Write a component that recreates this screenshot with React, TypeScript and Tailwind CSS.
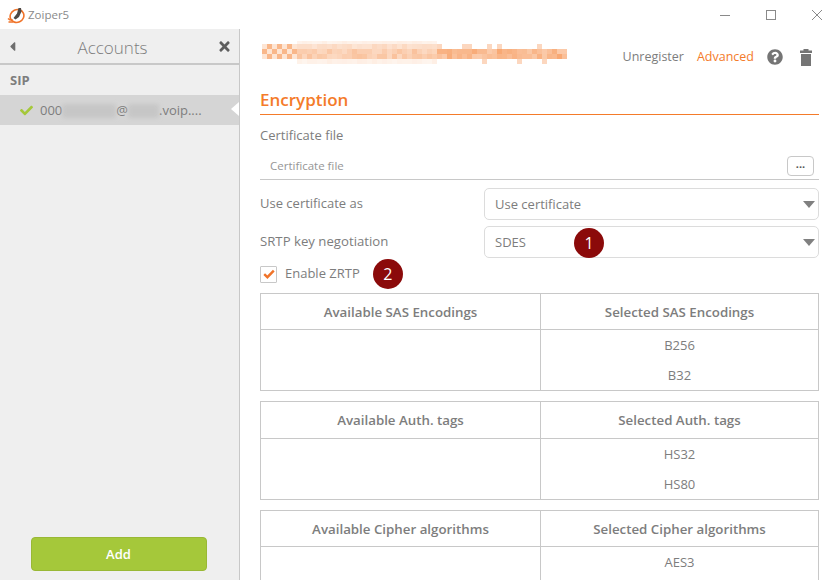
import { FaCaretLeft, FaCheck, FaQuestionCircle, FaTimes } from "react-icons/fa";

const FONT = "font-['Open_Sans','Noto_Sans',sans-serif]";

const BLUR_COLS = 61;
const BLUR_CELL = 5;
// top and height of each smear row, the first and last are clipped
const BLUR_ROWS = [
	{ y: 0, h: 3 },
	{ y: 3, h: 5 },
	{ y: 8, h: 5 },
	{ y: 13, h: 5 },
	{ y: 18, h: 5 },
];

function smearOpacity(col: number, row: number): number {
	const seed = Math.abs(Math.sin(col * 12.9898 + row * 78.233) * 43758.5453) % 1;
	if (col < 7) {
		if (row === 0 || row === 4) {
			return 0;
		}
		return (col + row) % 2 === 0 ? 0.55 : 0.2;
	}
	if (col < 35) {
		if (row === 0 || row === 4) {
			return 0.08 + seed * 0.05;
		}
		return row === 1 ? 0.2 + seed * 0.1 : 0.28 + seed * 0.18;
	}
	if (row === 0) {
		return 0;
	}
	if (row === 1 || row === 4) {
		return seed > 0.75 ? 0.3 : 0;
	}
	return 0.38 + seed * 0.28;
}

// pixelated orange smear over the account name
function BlurredName(): React.JSX.Element {
	const cells: React.JSX.Element[] = [];
	BLUR_ROWS.forEach((row, rowIndex) => {
		for (let col = 0; col < BLUR_COLS; col++) {
			cells.push(
				<rect
					key={`${col}-${rowIndex}`}
					x={col * BLUR_CELL}
					y={row.y}
					width={BLUR_CELL}
					height={row.h}
					fill="#f47b2a"
					opacity={smearOpacity(col, rowIndex)}
				/>,
			);
		}
	});
	return (
		<svg width="305" height="23" className="mb-[9px]" aria-hidden="true">
			{cells}
		</svg>
	);
}

function ZoiperLogo(): React.JSX.Element {
	return (
		<svg width="18" height="18" viewBox="0 0 18 18" fill="none" aria-hidden="true">
			<ellipse cx="10" cy="10" rx="7" ry="6.3" stroke="#f0742a" strokeWidth="1.6" transform="rotate(-25 10 10)" />
			<path d="M6.5 12 10 7.5 11.5 2h2.5l.5 3.5-2.5 5.5-3.5 2.5z" fill="#4f4a46" />
			<path d="M1 12.5c1.5 1.5 3 2 5 1.5M1.5 16h5" stroke="#f0742a" strokeWidth="1.4" />
		</svg>
	);
}

function TrashIcon(): React.JSX.Element {
	return (
		<svg width="12" height="17" viewBox="0 0 12 17" fill="#757575" aria-hidden="true">
			<path d="M3.5 0h5v1.5H12V4H0V1.5h3.5zM1 5h10v12H1z" />
		</svg>
	);
}

function Smudge({ className }: { className: string }): React.JSX.Element {
	return <span className={`inline-block h-[14px] bg-[#bdbdbd] opacity-60 blur-[2px] ${className}`} />;
}

function Select({ value, children }: { value: string; children?: React.ReactNode }): React.JSX.Element {
	return (
		<div className="relative flex h-[32px] w-[335px] items-center justify-between rounded-[5px] border border-[#dcdcdc] pl-[10px] pr-[3px] text-[13px] text-[#7d7d7d]">
			<span className="pt-[1px]">{value}</span>
			<svg width="12" height="7" viewBox="0 0 12 7" aria-hidden="true">
				<path d="M0 0h12L6 7z" fill="#808080" />
			</svg>
			{children}
		</div>
	);
}

function Badge({ label, className }: { label: string; className?: string }): React.JSX.Element {
	return (
		<span
			className={`flex h-[30px] w-[30px] items-center justify-center rounded-full bg-[#8b0a0a] text-[16px] text-white ${className ?? ""}`}
		>
			{label}
		</span>
	);
}

type EncTable = { left: string; right: string; values: string[]; tall?: boolean };

const TABLES: EncTable[] = [
	{ left: "Available SAS Encodings", right: "Selected SAS Encodings", values: ["B256", "B32"] },
	{ left: "Available Auth. tags", right: "Selected Auth. tags", values: ["HS32", "HS80"], tall: true },
	{ left: "Available Cipher algorithms", right: "Selected Cipher algorithms", values: ["AES3", ""] },
];

function ListTable({ table }: { table: EncTable }): React.JSX.Element {
	return (
		<div className="grid shrink-0 grid-cols-[280px_1fr] border border-[#c8c8c8] text-[13.3px] text-[#7d7d7d]">
			<div className={`flex items-center justify-center border-r border-b border-[#c8c8c8] pt-[2px] font-semibold ${table.tall ? "h-[37px]" : "h-[36px]"}`}>
				{table.left}
			</div>
			<div className="flex items-center justify-center border-b border-[#c8c8c8] pt-[2px] font-semibold">
				{table.right}
			</div>
			<div className="border-r border-[#c8c8c8]" />
			<div className="flex flex-col text-[13px]">
				{table.values.map((value, index) => (
					<div key={`${value}-${index}`} className="flex h-[30px] items-center justify-center pt-[2px]">
						{value}
					</div>
				))}
			</div>
		</div>
	);
}

export default function App(): React.JSX.Element {
	return (
		<div className={`flex h-[580px] w-[828px] flex-col overflow-hidden bg-white ${FONT}`}>
			<div className="flex h-[29px] shrink-0 items-center">
				<div className="flex items-center gap-[3px] pl-[7px] text-[11.5px] text-[#8a8a8a]">
					<ZoiperLogo />
					<span>Zoiper5</span>
				</div>
				<div className="ml-auto flex items-center gap-[36px] pr-[6px]">
					<svg width="10" height="10" viewBox="0 0 10 10" aria-hidden="true">
						<path d="M0 5.5h10" stroke="#8a8a8a" />
					</svg>
					<svg width="10" height="10" viewBox="0 0 10 10" aria-hidden="true">
						<rect x="0.5" y="0.5" width="9" height="9" fill="none" stroke="#8a8a8a" />
					</svg>
					<svg width="10" height="10" viewBox="0 0 10 10" aria-hidden="true">
						<path d="M0 0l10 10M10 0 0 10" stroke="#8a8a8a" />
					</svg>
				</div>
			</div>

			<div className="flex min-h-0 flex-1">
				<aside className="flex w-[240px] shrink-0 flex-col border-r border-[#c8c8c8] bg-[#efefef]">
					<div className="flex h-[36px] shrink-0 items-center justify-between border-b-2 border-[#c8c8c8] pl-[5px] pr-[7px] text-[#6e6e6e]">
						<FaCaretLeft className="text-[15px]" />
						<span className="mr-[12px] pt-[3px] text-[17px] font-light text-[#7d7d7d]">Accounts</span>
						<FaTimes className="text-[15px] text-[#5f5f5f]" />
					</div>
					<div className="flex h-[30px] shrink-0 items-end px-[10px] pb-[5px] text-[13px] font-bold text-[#7d7d7d]">SIP</div>
					<div className="relative flex h-[30px] shrink-0 items-center bg-[#d5d5d5] pl-[20px] pt-[1px] text-[13px] text-[#7d7d7d]">
						<FaCheck className="mr-[7px] text-[13px] text-[#a5c83a]" />
						<span>000</span>
						<Smudge className="w-[54px]" />
						<span>@</span>
						<Smudge className="w-[31px]" />
						<span>.voip....</span>
						<span className="absolute right-0 top-[7px] h-0 w-0 border-y-[7px] border-r-[8px] border-y-transparent border-r-white" />
					</div>
					<div className="mt-auto flex justify-center pb-[9px] pr-[2px]">
						<button className="h-[34px] w-[176px] rounded-[4px] border border-[#99b835] bg-[#a5c83a] pt-[1px] text-[13px] font-semibold text-white">
							Add
						</button>
					</div>
				</aside>

				<main className="flex min-w-0 flex-1 flex-col pl-[20px] pr-[9px]">
					<div className="flex h-[56px] shrink-0 items-center pl-[2px]">
						<BlurredName />
						<div className="ml-auto flex items-center pr-[7px] text-[12.5px]">
							<span className="text-[#7d7d7d]">Unregister</span>
							<span className="ml-[13px] text-[#f47b2a]">Advanced</span>
							<FaQuestionCircle className="ml-[13px] text-[16px] text-[#757575]" />
							<span className="ml-[17px]">
								<TrashIcon />
							</span>
						</div>
					</div>
					<h2 className="shrink-0 border-b border-[#f47b2a] pb-[1px] pt-[1px] text-[17px] font-semibold leading-[27px] text-[#f47b2a]">
						Encryption
					</h2>
					<div className="mt-[11px] shrink-0 text-[13px] leading-[18px] text-[#7d7d7d]">Certificate file</div>
					<div className="mt-[8px] flex h-[28px] shrink-0 items-center justify-between border-b border-[#c8c8c8] pl-[10px] pr-[5px] text-[11.5px] text-[#969696]">
						<span>Certificate file</span>
						<button className="flex h-[20px] w-[27px] items-center justify-center rounded-[4px] border border-[#c8c8c8] pb-[2px] text-[11px] font-bold text-[#555]">
							...
						</button>
					</div>
					<div className="mt-[8px] flex shrink-0 items-center justify-between text-[13px] text-[#7d7d7d]">
						<span>Use certificate as</span>
						<Select value="Use certificate" />
					</div>
					<div className="mt-[6px] flex shrink-0 items-center justify-between text-[13px] text-[#7d7d7d]">
						<span className="text-[13.2px]">SRTP key negotiation</span>
						<Select value="SDES">
							<Badge label="1" className="absolute left-[89px] top-[1px]" />
						</Select>
					</div>
					<div className="mt-[1px] flex h-[30px] shrink-0 items-center text-[13px] text-[#7d7d7d]">
						<span className="flex h-[17px] w-[17px] items-center justify-center rounded-[1px] border border-[#c8c8c8]">
							<svg width="12" height="10" viewBox="0 0 12 10" fill="none" aria-hidden="true">
								<path d="M1.2 5.2 4.4 8.2 10.8 1.6" stroke="#f0742a" strokeWidth="2.4" />
							</svg>
						</span>
						<span className="ml-[8px]">Enable ZRTP</span>
						<Badge label="2" className="ml-[13px]" />
					</div>
					<div className="mt-[4px] flex flex-col gap-[10px]">
						{TABLES.map((table) => (
							<ListTable key={table.left} table={table} />
						))}
					</div>
				</main>
			</div>
		</div>
	);
}
